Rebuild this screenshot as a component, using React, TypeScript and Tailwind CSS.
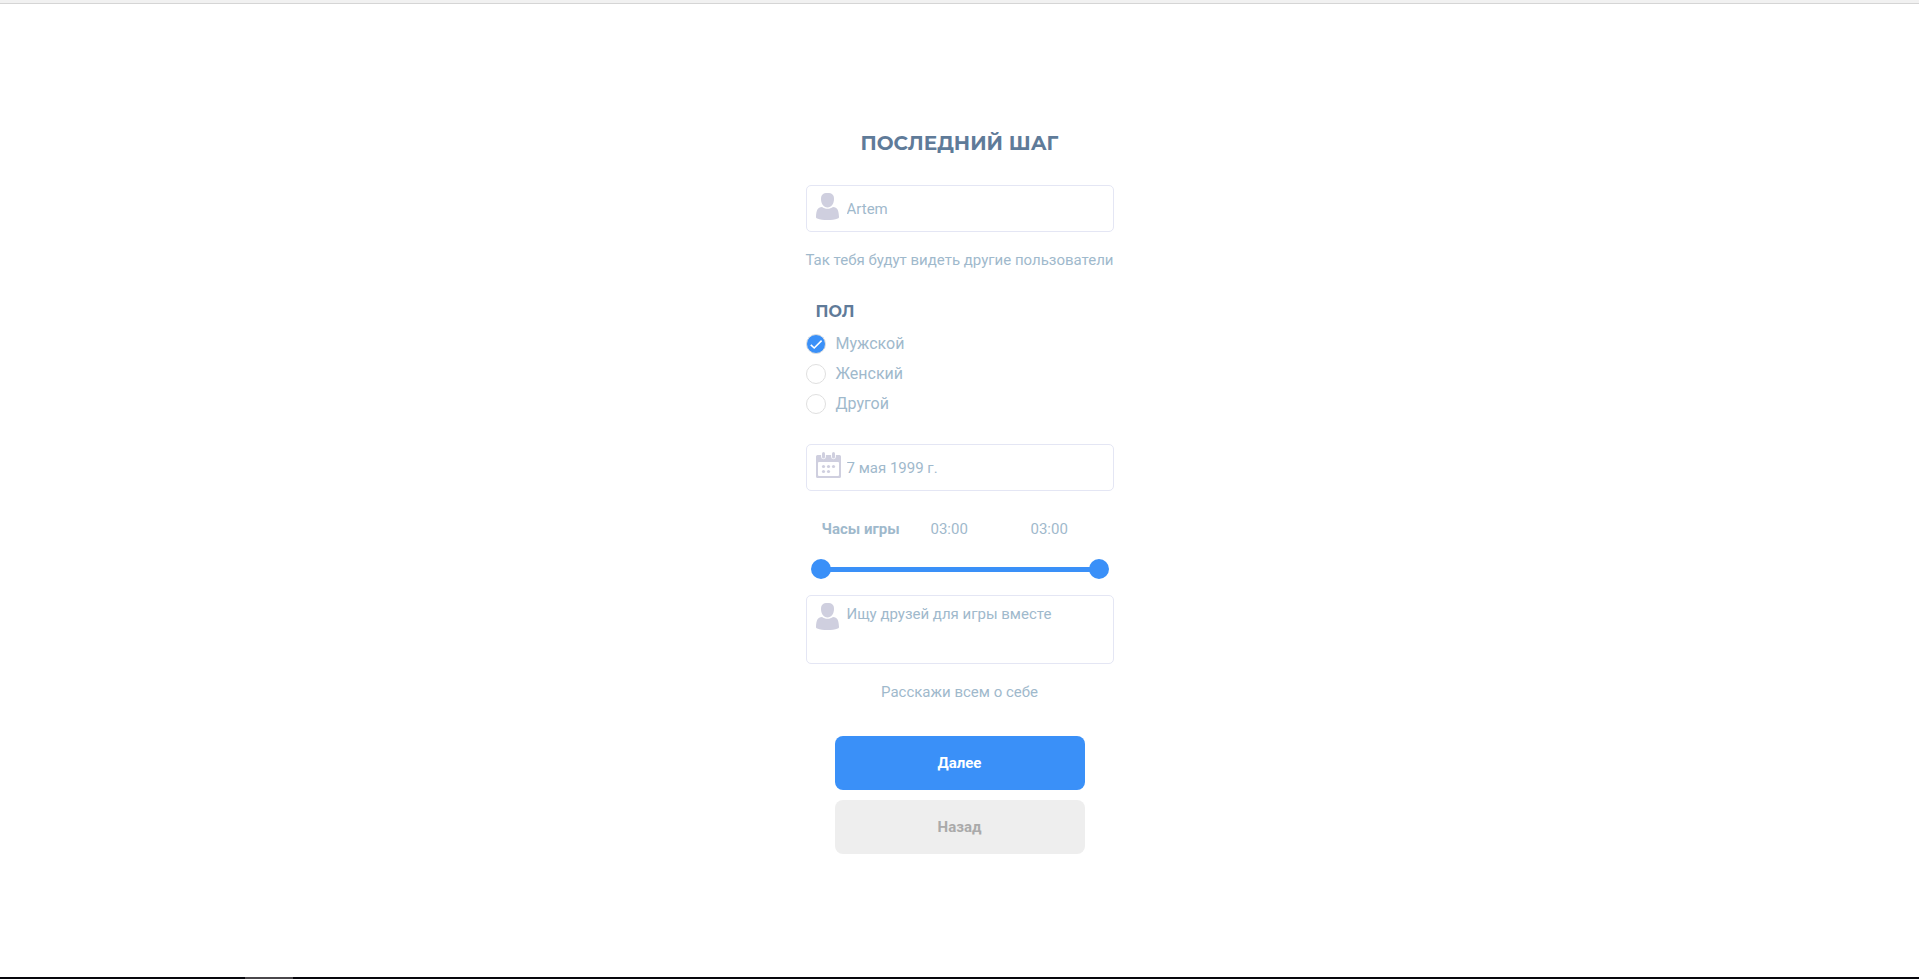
import { useState, type ReactNode } from 'react';

const GENDERS = [
  { value: 'male', label: 'Мужской' },
  { value: 'female', label: 'Женский' },
  { value: 'other', label: 'Другой' },
];

// The scale covers one full day and starts at 3 in the morning
const DAY_START = 3;
const DAY_LENGTH = 24;

function formatHour(offset: number) {
  return `${String((DAY_START + offset) % 24).padStart(2, '0')}:00`;
}

function UserIcon() {
  return (
    <svg width="23" height="27" viewBox="0 0 23 27" fill="#cfcfdf" aria-hidden="true">
      <path d="M11.5 0C16 0 18 1.8 18 6C18 10.8 15.4 14.4 11.5 14.4C7.6 14.4 5 10.8 5 6C5 1.8 7 0 11.5 0Z" />
      <path d="M6 14C7.6 15.2 9.4 15.8 11.5 15.8C13.6 15.8 15.4 15.2 17 14C21.4 14.2 22.8 17.4 23 24C23 24.8 22.6 25.2 21.8 25.5C18.8 26.5 15.6 27 11.5 27C7.4 27 4.2 26.5 1.2 25.5C0.4 25.2 0 24.8 0 24C0.2 17.4 1.6 14.2 6 14Z" />
    </svg>
  );
}

function CalendarIcon() {
  return (
    <svg width="25" height="26" viewBox="0 0 25 26" fill="#cfcfdf" aria-hidden="true">
      <path
        fillRule="evenodd"
        d="M1.5 3H5.1V4.8A2.4 2.4 0 0 0 9.9 4.8V3H15.1V4.8A2.4 2.4 0 0 0 19.9 4.8V3H23.5A1.5 1.5 0 0 1 25 4.5V24.5A1.5 1.5 0 0 1 23.5 26H1.5A1.5 1.5 0 0 1 0 24.5V4.5A1.5 1.5 0 0 1 1.5 3ZM3 10A1 1 0 0 0 2 11V23A1 1 0 0 0 3 24H22A1 1 0 0 0 23 23V11A1 1 0 0 0 22 10Z"
      />
      <rect x="6" y="0" width="3" height="6.4" rx="1.5" />
      <rect x="16" y="0" width="3" height="6.4" rx="1.5" />
      <circle cx="7.5" cy="14.5" r="1.6" />
      <circle cx="12.5" cy="14.5" r="1.6" />
      <circle cx="17.5" cy="14.5" r="1.6" />
      <circle cx="7.5" cy="19.5" r="1.6" />
      <circle cx="12.5" cy="19.5" r="1.6" />
    </svg>
  );
}

function Field({ icon, children }: { icon: ReactNode; children: ReactNode }) {
  return (
    <div className="flex w-full rounded-[5px] border border-[#e4e6f4] bg-white focus-within:border-[#3a90f8]">
      <span className="w-10 shrink-0 pt-[7px] pl-[9px]">{icon}</span>
      {children}
    </div>
  );
}

const rangeClass =
  'pointer-events-none absolute inset-0 h-5 w-full appearance-none bg-transparent outline-none [&::-webkit-slider-thumb]:pointer-events-auto [&::-webkit-slider-thumb]:h-5 [&::-webkit-slider-thumb]:w-5 [&::-webkit-slider-thumb]:cursor-pointer [&::-webkit-slider-thumb]:appearance-none [&::-webkit-slider-thumb]:rounded-full [&::-webkit-slider-thumb]:bg-[#3a90f8]';

export default function App() {
  const [name, setName] = useState('Artem');
  const [gender, setGender] = useState('male');
  const [birthday, setBirthday] = useState('7 мая 1999 г.');
  const [about, setAbout] = useState('Ищу друзей для игры вместе');
  const [from, setFrom] = useState(0);
  const [to, setTo] = useState(DAY_LENGTH);

  return (
    <div className="flex min-h-screen flex-col bg-white font-[Roboto,sans-serif] text-[15px] leading-6 text-[#9fb9cc]">
      <header className="h-1 border-b border-[#d5d5d5] bg-[#f1f1f1]" />

      <main className="flex flex-1 items-center justify-center">
        <form className="flex flex-col items-center" onSubmit={(e) => e.preventDefault()}>
          <h1 className="mb-[26px] font-[Montserrat,'Open_Sans',sans-serif] text-xl leading-8 font-bold text-[#5f7b99] uppercase">
            Последний шаг
          </h1>

          <Field icon={<UserIcon />}>
            <input
              type="text"
              aria-label="Имя"
              aria-describedby="name-hint"
              value={name}
              onChange={(e) => setName(e.target.value)}
              className="h-[45px] w-0 flex-1 outline-none"
            />
          </Field>
          <p id="name-hint" className="mt-4">Так тебя будут видеть другие пользователи</p>

          <fieldset className="mt-7 w-full">
            <legend className="mb-[5px] pl-[10px] font-[Montserrat,'Open_Sans',sans-serif] text-base leading-6 font-bold text-[#5f7b99] uppercase">
              Пол
            </legend>
            {GENDERS.map((g) => (
              <label key={g.value} className="flex h-[30px] cursor-pointer items-center gap-[10px] text-base">
                <span className="relative flex h-5 w-5">
                  <input
                    type="radio"
                    name="gender"
                    value={g.value}
                    checked={gender === g.value}
                    onChange={() => setGender(g.value)}
                    className="peer h-5 w-5 appearance-none rounded-full border border-[#dfdfdf] bg-white checked:bg-[#3a90f8]"
                  />
                  <svg
                    viewBox="0 0 20 20"
                    fill="none"
                    stroke="#fff"
                    strokeWidth="1.6"
                    className="pointer-events-none absolute inset-0 hidden h-5 w-5 peer-checked:block"
                    aria-hidden="true"
                  >
                    <path d="M4.8 10.8L8.2 14L15.6 6.6" />
                  </svg>
                </span>
                {g.label}
              </label>
            ))}
          </fieldset>

          <div className="mt-[25px] w-full">
            <Field icon={<CalendarIcon />}>
              <input
                type="text"
                aria-label="Дата рождения"
                value={birthday}
                onChange={(e) => setBirthday(e.target.value)}
                className="h-[45px] w-0 flex-1 outline-none"
              />
            </Field>
          </div>

          <div className="mt-[26px] flex w-full pl-4">
            <span className="w-[109px] font-bold">Часы игры</span>
            <output className="w-[100px]">{formatHour(from)}</output>
            <output>{formatHour(to)}</output>
          </div>
          <div className="mt-[18px] mb-4 w-full px-[5px]">
            <div className="relative flex h-5 items-center px-[10px]">
              <div className="h-[5px] w-full bg-[#d9e9fd]">
                <div
                  className="h-full bg-[#3a90f8]"
                  style={{
                    marginLeft: `${(from / DAY_LENGTH) * 100}%`,
                    width: `${((to - from) / DAY_LENGTH) * 100}%`,
                  }}
                />
              </div>
              <input
                type="range"
                aria-label="Начало игры"
                min={0}
                max={DAY_LENGTH}
                value={from}
                onChange={(e) => setFrom(Math.min(Number(e.target.value), to))}
                className={rangeClass}
              />
              <input
                type="range"
                aria-label="Конец игры"
                min={0}
                max={DAY_LENGTH}
                value={to}
                onChange={(e) => setTo(Math.max(Number(e.target.value), from))}
                className={rangeClass}
              />
            </div>
          </div>

          <Field icon={<UserIcon />}>
            <textarea
              aria-label="О себе"
              aria-describedby="about-hint"
              value={about}
              onChange={(e) => setAbout(e.target.value)}
              className="h-[67px] w-0 flex-1 resize-none pt-[6px] outline-none"
            />
          </Field>
          <p id="about-hint" className="mt-4">Расскажи всем о себе</p>

          <div className="mt-8 flex w-[250px] flex-col gap-[10px] font-bold">
            <button type="submit" className="h-[54px] cursor-pointer rounded-lg bg-[#3a90f8] text-white">
              Далее
            </button>
            <button type="button" className="h-[54px] cursor-pointer rounded-lg bg-[#eeeeee] text-[#aaaaaa]">
              Назад
            </button>
          </div>
        </form>
      </main>

      <footer className="h-[2px] bg-[#06060c]">
        <div className="ml-[245px] h-full w-12 bg-[#4a474b]" />
      </footer>
    </div>
  );
}
